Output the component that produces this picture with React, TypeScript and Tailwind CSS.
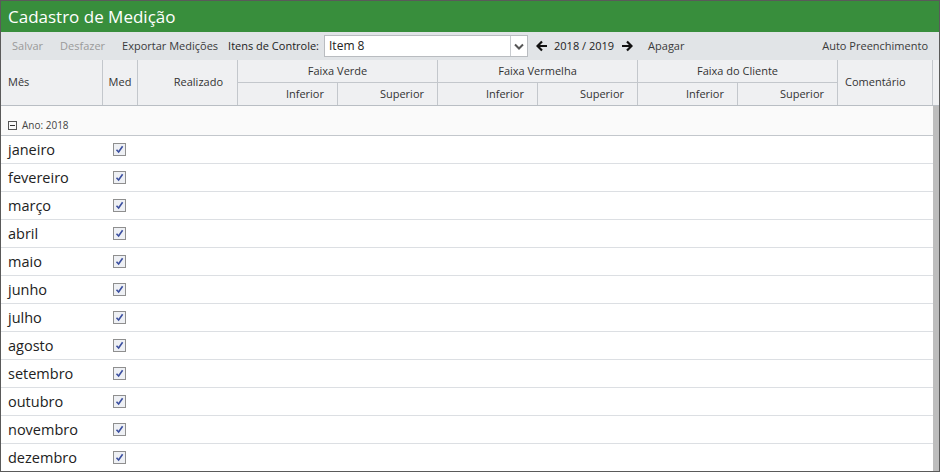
import React from 'react';

const months = [
  'janeiro', 'fevereiro', 'março', 'abril', 'maio', 'junho',
  'julho', 'agosto', 'setembro', 'outubro', 'novembro', 'dezembro',
];

const cols = 'grid grid-cols-[102px_35px_100px_100px_100px_100px_100px_100px_100px_95px_1fr]';

const CheckBox: React.FC = () => (
  <span className="w-[13px] h-[13px] border border-[#8f8f8f] bg-[#eef0f4] flex items-center justify-center">
    <svg width="9" height="9" viewBox="0 0 9 9">
      <path d="M1.5 4.8 L3.6 7 L7.6 1.2" fill="none" stroke="#3b4fa0" strokeWidth="1.6" />
    </svg>
  </span>
);

const Arrow: React.FC<{ dir: 'left' | 'right' }> = ({ dir }) => (
  <svg width="12" height="12" viewBox="0 0 12 12" className={dir === 'left' ? '' : 'rotate-180'}>
    <path d="M6 1.5 L1.5 6 L6 10.5 M1.8 6 H11" fill="none" stroke="#111" strokeWidth="2.2" />
  </svg>
);

const App: React.FC = () => {
  return (
    <div className="w-[940px] h-[472px] border border-[#5a5a5a] bg-white flex flex-col overflow-hidden font-['Open_Sans',sans-serif] text-[#333]">
      {/* Title */}
      <div className="h-[31px] bg-[#388e3c] text-white text-[17px] leading-[31px] px-[7px] shrink-0">
        Cadastro de Medição
      </div>

      {/* Toolbar */}
      <div className="h-[28px] bg-[#e1e4e7] flex items-center text-[11px] shrink-0 pl-[11px] pr-[11px]">
        <span className="text-[#9a9a9a]">Salvar</span>
        <span className="text-[#9a9a9a] ml-[17px]">Desfazer</span>
        <span className="ml-[17px] text-[#3a3a3a]">Exportar Medições</span>
        <span className="ml-[10px] text-[#222]">Itens de Controle:</span>
        <div className="ml-[5px] w-[204px] h-[22px] bg-white border border-[#b9bcc0] flex items-center">
          <span className="flex-1 pl-[4px] text-[12px] text-[#222]">Item 8</span>
          <span className="w-[17px] h-full border-l border-[#c9ccd0] flex items-center justify-center">
            <svg width="10" height="7" viewBox="0 0 10 7">
              <path d="M1 1.5 L5 5.5 L9 1.5" fill="none" stroke="#555" strokeWidth="2" />
            </svg>
          </span>
        </div>
        <span className="ml-[8px] flex items-center"><Arrow dir="left" /></span>
        <span className="ml-[6px] text-[#222]">2018 / 2019</span>
        <span className="ml-[7px] flex items-center"><Arrow dir="right" /></span>
        <span className="ml-[15px] text-[#3a3a3a]">Apagar</span>
        <span className="ml-auto text-[#3a3a3a]">Auto Preenchimento</span>
      </div>

      {/* Header */}
      <div className={`${cols} grid-rows-[23px_22px] h-[46px] bg-[#eff0f2] border-b border-[#b9bec4] text-[11px] text-[#333] shrink-0`}>
        <div className="row-span-2 border-r border-[#c3c7cc] flex items-center pl-[7px]">Mês</div>
        <div className="row-span-2 border-r border-[#c3c7cc] flex items-center justify-center">Med</div>
        <div className="row-span-2 border-r border-[#c3c7cc] flex items-center justify-end pr-[14px]">Realizado</div>
        <div className="col-span-2 border-r border-b border-[#c3c7cc] flex items-center justify-center">Faixa Verde</div>
        <div className="col-span-2 border-r border-b border-[#c3c7cc] flex items-center justify-center">Faixa Vermelha</div>
        <div className="col-span-2 border-r border-b border-[#c3c7cc] flex items-center justify-center">Faixa do Cliente</div>
        <div className="row-span-2 border-r border-[#c3c7cc] flex items-center pl-[7px]">Comentário</div>
        <div className="row-span-2" />
        {['Inferior', 'Superior', 'Inferior', 'Superior', 'Inferior', 'Superior'].map((t, i) => (
          <div key={i} className="border-r border-[#c3c7cc] flex items-center justify-end pr-[13px]">{t}</div>
        ))}
      </div>

      {/* Body */}
      <div className="flex flex-1 min-h-0">
        <div className="flex-1 flex flex-col">
          <div className="h-[30px] bg-[#fafafa] border-b border-[#c3c7cc] flex items-center pt-[10px] pl-[7px] text-[10px] text-[#444] shrink-0">
            <span className="w-[9px] h-[9px] border border-[#555] flex items-center justify-center mr-[5px]">
              <span className="w-[5px] h-px bg-[#333]" />
            </span>
            Ano: 2018
          </div>
          {months.map((m) => (
            <div key={m} className="h-[28px] border-b border-[#dcdfe3] flex items-center shrink-0">
              <span className="w-[112px] pl-[7px] text-[14.5px] text-[#222]">{m}</span>
              <CheckBox />
            </div>
          ))}
        </div>
        <div className="w-[6px] bg-[#bdbdbd]" />
      </div>
    </div>
  );
};

export default App;
